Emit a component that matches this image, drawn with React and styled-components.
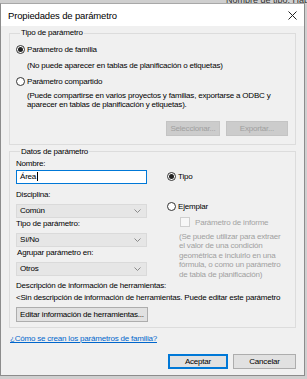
import React from "react";
import styled, { createGlobalStyle } from "styled-components";

const Global = createGlobalStyle`
  html, body { margin: 0; padding: 0; }
  body { background: #cfcfcf; font-family: "Liberation Sans", Arial, sans-serif; }
`;

const Page = styled.div`
  width: 307px;
  height: 379px;
  overflow: hidden;
  background: #cfcfcf;
  display: flex;
  flex-direction: column;
`;

const BackStrip = styled.div`
  height: 3px;
  flex-shrink: 0;
  overflow: hidden;
  font-size: 9px;
  color: #333;
  padding-left: 226px;
  line-height: 0px;
  white-space: nowrap;
`;

const Dialog = styled.div`
  width: 305px;
  height: 373px;
  box-sizing: border-box;
  flex-shrink: 0;
  border: 1px solid #8c8c8c;
  border-top-color: #a8a8a8;
  background: #f0f0f0;
  display: flex;
  flex-direction: column;
  font-size: 8px;
  letter-spacing: -0.2px;
  color: #000;
  overflow: hidden;
`;

const TitleBar = styled.div`
  height: 22px;
  flex-shrink: 0;
  background: #fff;
  display: flex;
  align-items: center;
  justify-content: space-between;
  padding: 0 7px 0 7px;
  font-size: 9.5px;
  letter-spacing: -0.15px;
  color: #000;
`;

const Body = styled.div`
  flex: 1;
  display: flex;
  flex-direction: column;
  padding: 2px 8px 0 8px;
`;

const Group = styled.fieldset`
  margin: ${(p) => p.$mt || 0}px 0 0 0;
  border: 1px solid #dcdcdc;
  padding: ${(p) => p.$pad};
  display: flex;
  flex-direction: column;
  min-width: 0;
`;

const Legend = styled.legend`
  padding: 0 1px;
  margin-left: 4px;
  line-height: 10px;
  color: #000;
`;

const RadioRow = styled.label`
  display: flex;
  align-items: center;
  gap: 2px;
  height: 13px;
  white-space: nowrap;
  margin-top: ${(p) => p.$mt || 0}px;
  padding-left: ${(p) => p.$pl || 0}px;
  color: ${(p) => (p.$disabled ? "#a3a3a3" : "#000")};
`;

const RadioCircle = styled.span`
  width: 9px;
  height: 9px;
  box-sizing: border-box;
  border-radius: 50%;
  border: 1px solid #333;
  background: #fff;
  display: flex;
  align-items: center;
  justify-content: center;
  flex-shrink: 0;
  &::after {
    content: "";
    width: 5px;
    height: 5px;
    border-radius: 50%;
    background: ${(p) => (p.$checked ? "#222" : "transparent")};
  }
`;

const CheckBox = styled.span`
  width: 8px;
  height: 8px;
  border: 1px solid #cfcfcf;
  background: #f7f7f7;
  flex-shrink: 0;
  margin-right: 3px;
`;

const Note = styled.div`
  padding-left: ${(p) => p.$indent}px;
  margin-top: ${(p) => p.$mt || 0}px;
  line-height: 9.5px;
  color: ${(p) => (p.$muted ? "#a0a0a0" : "#000")};
  white-space: pre;
`;

const ButtonRow = styled.div`
  display: flex;
  justify-content: ${(p) => (p.$start ? "flex-start" : "flex-end")};
  gap: ${(p) => p.$gap || 6}px;
  margin-top: ${(p) => p.$mt || 0}px;
  padding-right: ${(p) => p.$pr || 0}px;
`;

const Button = styled.div`
  width: ${(p) => p.$w}px;
  height: 15px;
  box-sizing: border-box;
  display: flex;
  align-items: center;
  justify-content: center;
  white-space: nowrap;
  background: ${(p) => (p.$disabled ? "#cccccc" : "#e1e1e1")};
  border: 1px solid ${(p) => (p.$disabled ? "#c4c4c4" : p.$default ? "#0078d7" : "#adadad")};
  box-shadow: ${(p) => (p.$default ? "inset 0 0 0 1px #0078d7" : "none")};
  color: ${(p) => (p.$disabled ? "#a0a0a0" : "#000")};
`;

const DataGrid = styled.div`
  display: grid;
  grid-template-columns: 131px 1fr;
  column-gap: 20px;
  align-items: start;
`;

const Col = styled.div`
  display: flex;
  flex-direction: column;
`;

const FieldLabel = styled.div`
  height: 12px;
  line-height: 12px;
  white-space: nowrap;
  margin-top: ${(p) => p.$mt || 0}px;
  padding-left: ${(p) => p.$pl || 0}px;
`;

const TextInput = styled.div`
  height: 14px;
  box-sizing: border-box;
  border: 1px solid #0078d7;
  background: #fff;
  display: flex;
  align-items: center;
  padding-left: 3px;
`;

const Caret = styled.span`
  display: inline-block;
  width: 1px;
  height: 9px;
  background: #000;
  margin-left: 1px;
`;

const Select = styled.div`
  height: 14px;
  box-sizing: border-box;
  border: 1px solid #dadada;
  background: #e6e6e6;
  display: flex;
  align-items: center;
  justify-content: space-between;
  padding: 0 5px 0 3px;
  margin-top: 3px;
`;

const Link = styled.a`
  align-self: flex-start;
  color: #0066cc;
  text-decoration: underline;
  margin: 5px 0 0 1px;
  height: 12px;
  line-height: 12px;
  white-space: nowrap;
`;

const Chevron = () => (
  <svg width="7" height="4" viewBox="0 0 7 4">
    <path d="M0.5 0.5 L3.5 3.5 L6.5 0.5" fill="none" stroke="#8a8a8a" strokeWidth="1" />
  </svg>
);

const CloseIcon = () => (
  <svg width="9" height="9" viewBox="0 0 9 9">
    <path d="M0.5 0.5 L8.5 8.5 M8.5 0.5 L0.5 8.5" stroke="#222" strokeWidth="1" />
  </svg>
);

export default function App() {
  return (
    <Page>
      <Global />
      <BackStrip>Nombre de tipo: HabitaL a</BackStrip>
      <Dialog>
        <TitleBar>
          <span>Propiedades de parámetro</span>
          <CloseIcon />
        </TitleBar>
        <Body>
          <Group $pad="0 6px 8px 6px">
            <Legend>Tipo de parámetro</Legend>
            <RadioRow $mt={5}>
              <RadioCircle $checked />
              Parámetro de familia
            </RadioRow>
            <Note $indent={11} $mt={5}>(No puede aparecer en tablas de planificación o etiquetas)</Note>
            <RadioRow $mt={4}>
              <RadioCircle />
              Parámetro compartido
            </RadioRow>
            <Note $indent={11} $mt={3}>{"(Puede compartirse en varios proyectos y familias, exportarse a ODBC y\naparecer en tablas de planificación y etiquetas)."}</Note>
            <ButtonRow $mt={11} $pr={1}>
              <Button $w={54} $disabled>Seleccionar...</Button>
              <Button $w={62} $disabled>Exportar...</Button>
            </ButtonRow>
          </Group>

          <Group $pad="1px 8px 5px 6px" $mt={2}>
            <Legend>Datos de parámetro</Legend>
            <DataGrid>
              <Col>
                <FieldLabel>Nombre:</FieldLabel>
                <TextInput>
                  Área<Caret />
                </TextInput>
                <FieldLabel $mt={5}>Disciplina:</FieldLabel>
                <Select>
                  Común
                  <Chevron />
                </Select>
                <FieldLabel>Tipo de parámetro:</FieldLabel>
                <Select>
                  Sí/No
                  <Chevron />
                </Select>
                <FieldLabel $pl={1}>Agrupar parámetro en:</FieldLabel>
                <Select>
                  Otros
                  <Chevron />
                </Select>
              </Col>
              <Col>
                <RadioRow $mt={12}>
                  <RadioCircle $checked />
                  Tipo
                </RadioRow>
                <RadioRow $mt={17}>
                  <RadioCircle />
                  Ejemplar
                </RadioRow>
                <RadioRow $mt={3} $pl={13} $disabled>
                  <CheckBox />
                  Parámetro de informe
                </RadioRow>
                <Note $muted $indent={12} $mt={3}>
                  {"(Se puede utilizar para extraer\nel valor de una condición\ngeométrica e incluirlo en una\nfórmula, o como un parámetro\nde tabla de planificación)"}
                </Note>
              </Col>
            </DataGrid>
            <FieldLabel $mt={1}>Descripción de información de herramientas:</FieldLabel>
            <FieldLabel>&lt;Sin descripción de información de herramientas. Puede editar este parámetro</FieldLabel>
            <ButtonRow $mt={3} $start>
              <Button $w={132}>Editar información de herramientas...</Button>
            </ButtonRow>
          </Group>

          <Link href="#">¿Cómo se crean los parámetros de familia?</Link>
          <ButtonRow $mt={9} $gap={5}>
            <Button $w={60} $default>Aceptar</Button>
            <Button $w={63}>Cancelar</Button>
          </ButtonRow>
        </Body>
      </Dialog>
    </Page>
  );
}
